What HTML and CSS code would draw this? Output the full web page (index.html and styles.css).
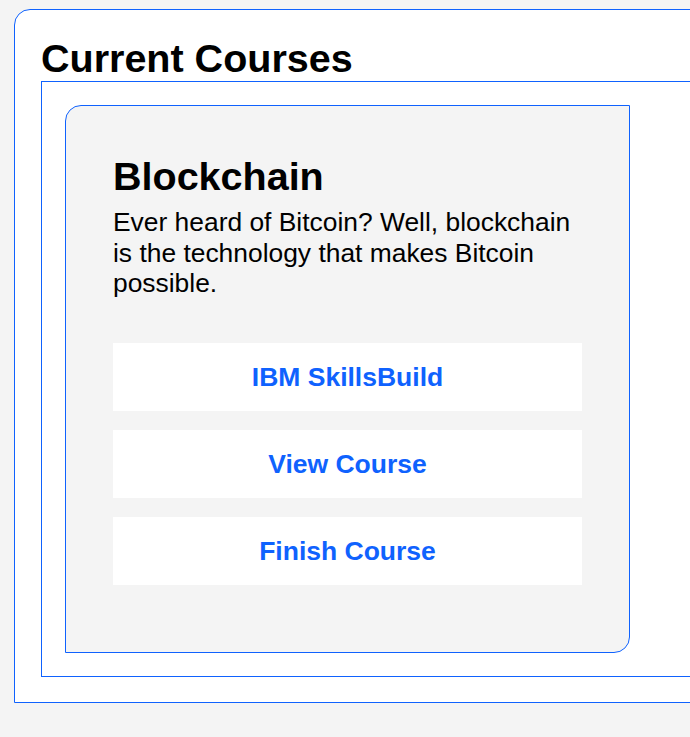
FILE: index.html
```html
<!DOCTYPE html>
<html lang="en">
<head>
<meta charset="utf-8">
<title>Current Courses</title>
<link rel="stylesheet" href="styles.css">
</head>
<body>
  <div class="viewport">
    <section class="panel">
      <h1 class="panel-title">Current Courses</h1>
      <div class="course-list">
        <article class="course-card">
          <h2 class="course-title">Blockchain</h2>
          <p class="course-desc">Ever heard of Bitcoin? Well, blockchain is the technology that makes Bitcoin possible.</p>
          <div class="course-actions">
            <a class="course-btn" href="#">IBM SkillsBuild</a>
            <a class="course-btn" href="#">View Course</a>
            <a class="course-btn" href="#">Finish Course</a>
          </div>
        </article>
      </div>
    </section>
  </div>
</body>
</html>
```

FILE: styles.css
```css
html,
body {
  margin: 0;
  overflow: hidden;
}

body {
  background: #f4f4f4;
  font-family: "Liberation Sans", Arial, sans-serif;
  color: #000;
}

.viewport {
  width: 690px;
  overflow: hidden;
  padding: 9px 0 34px 14px;
  box-sizing: border-box;
}

.panel {
  box-sizing: border-box;
  width: 740px;
  background: #fff;
  border: 1px solid #0f62fe;
  border-radius: 16px 16px 0 0;
  padding: 25px 26px 25px 26px;
}

.panel-title {
  margin: 0;
  font-size: 39.5px;
  font-weight: 700;
  line-height: 46px;
}

.course-list {
  display: flex;
  gap: 24px;
  border: 1px solid #0f62fe;
  padding: 23px;
}

.course-card {
  box-sizing: border-box;
  flex: 0 0 565px;
  width: 565px;
  background: #f4f4f4;
  border: 1px solid #0f62fe;
  border-radius: 16px 0 16px 0;
  padding: 47px 47px 67px 47px;
}

.course-title {
  margin: 0 0 8px;
  font-size: 39.5px;
  font-weight: 700;
  line-height: 46px;
}

.course-desc {
  margin: 0 0 44px;
  font-size: 26.4px;
  line-height: 30.67px;
}

.course-actions {
  display: flex;
  flex-direction: column;
  gap: 19px;
}

.course-btn {
  display: flex;
  align-items: center;
  justify-content: center;
  height: 68px;
  background: #fff;
  color: #0f62fe;
  font-size: 26.5px;
  font-weight: 700;
  text-decoration: none;
}
```
